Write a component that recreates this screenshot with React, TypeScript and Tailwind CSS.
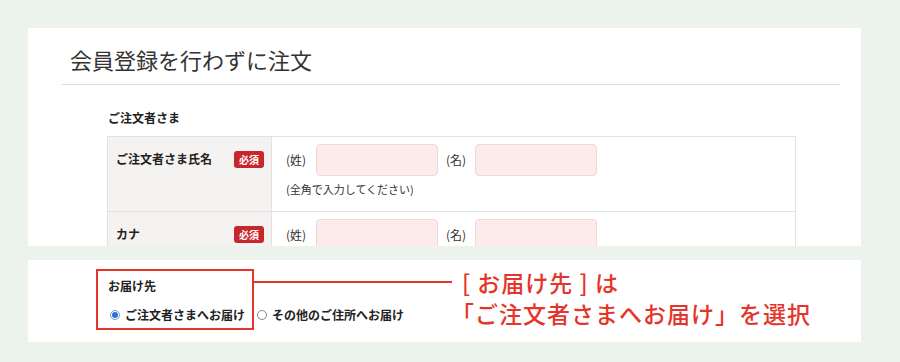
import React from "react";

const jp = "font-['Noto_Sans_CJK_JP','Noto_Sans',sans-serif]";

function Badge() {
  return (
    <span className="mt-[1px] flex h-[17px] w-[30px] items-center justify-center rounded-[3px] bg-[#c8262d] text-[10px] font-bold leading-none text-white">
      必須
    </span>
  );
}

function NameInput() {
  return <div className="h-[32px] w-[122px] rounded-[4px] border border-[#eed9d9] bg-[#fdeaea]" />;
}

function Row({ label, note, last }: { label: string; note?: boolean; last?: boolean }) {
  return (
    <div className={`flex h-[75px] ${last ? "" : "border-b border-[#e2e2e2]"}`}>
      <div className="flex w-[164px] shrink-0 items-start justify-between border-r border-[#e2e2e2] bg-[#f5f3f1] pl-[8px] pr-[7px] pt-[13px]">
        <span className="text-[12px] font-bold leading-[18px] text-[#222]">{label}</span>
        <Badge />
      </div>
      <div className="flex flex-col pl-[14px] pt-[7px]">
        <div className="flex items-center text-[12px] leading-[32px] text-[#333]">
          <span className="w-[30px]">(姓)</span>
          <NameInput />
          <span className="ml-[8px] w-[29px]">(名)</span>
          <NameInput />
        </div>
        {note && (
          <div className="mt-[5px] text-[11px] leading-[16px] text-[#333]">(全角で入力してください)</div>
        )}
      </div>
    </div>
  );
}

function Radio({ checked }: { checked?: boolean }) {
  return checked ? (
    <span className="flex h-[10px] w-[10px] shrink-0 items-center justify-center rounded-full border border-[#6d9be0] bg-white">
      <span className="h-[6px] w-[6px] rounded-full bg-[#2f6fd6]" />
    </span>
  ) : (
    <span className="block h-[10px] w-[10px] shrink-0 rounded-full border border-[#8a8a8a] bg-white" />
  );
}

export default function App() {
  return (
    <div className={`h-[362px] w-[900px] overflow-hidden bg-[#ebf3ec] pl-[28px] pt-[28px] ${jp}`}>
      {/* Top panel */}
      <div className="h-[218px] w-[833px] overflow-hidden bg-white pl-[34px] pr-[21px] pt-[15px]">
        <div className="border-b border-[#dcdcdc] pb-[8px] pl-[8px] text-[22px] leading-[33px] text-[#333]">
          会員登録を行わずに注文
        </div>
        <div className="ml-[46px] mt-[24px] text-[12px] font-bold leading-[18px] text-[#222]">ご注文者さま</div>
        <div className="ml-[45px] mt-[9px] w-[689px] border border-[#e2e2e2]">
          <Row label="ご注文者さま氏名" note />
          <Row label="カナ" last />
        </div>
      </div>

      {/* Bottom panel */}
      <div className="mt-[14px] flex h-[82px] w-[833px] items-start bg-white pl-[68px] pt-[9px]">
        <div className="h-[61px] w-[158px] shrink-0 border-2 border-[#e5352b] pl-[10px] pt-[6px]">
          <div className="text-[12px] font-bold leading-[18px] text-[#222]">お届け先</div>
          <div className="mt-[11px] flex items-center whitespace-nowrap text-[12px] font-bold leading-[18px] text-[#222]">
            <span className="ml-[2px] mr-[5px] flex">
              <Radio checked />
            </span>
            ご注文者さまへお届け
          </div>
        </div>
        <div className="flex w-[208px] shrink-0 flex-col">
          <div className="mt-[12px] h-[2px] w-[198px] bg-[#e5352b]" />
          <div className="mt-[23px] flex items-center whitespace-nowrap text-[12px] font-bold leading-[18px] text-[#222]">
            <span className="ml-[3px] mr-[5px] flex">
              <Radio />
            </span>
            その他のご住所へお届け
          </div>
        </div>
        <div className="-mt-[2px] flex flex-col whitespace-nowrap text-[23px] font-medium leading-[31px] tracking-[1px] text-[#e5352b]">
          <span>[ お届け先 ] は</span>
          <span className="-ml-[11px]">「ご注文者さまへお届け」を選択</span>
        </div>
      </div>
    </div>
  );
}
